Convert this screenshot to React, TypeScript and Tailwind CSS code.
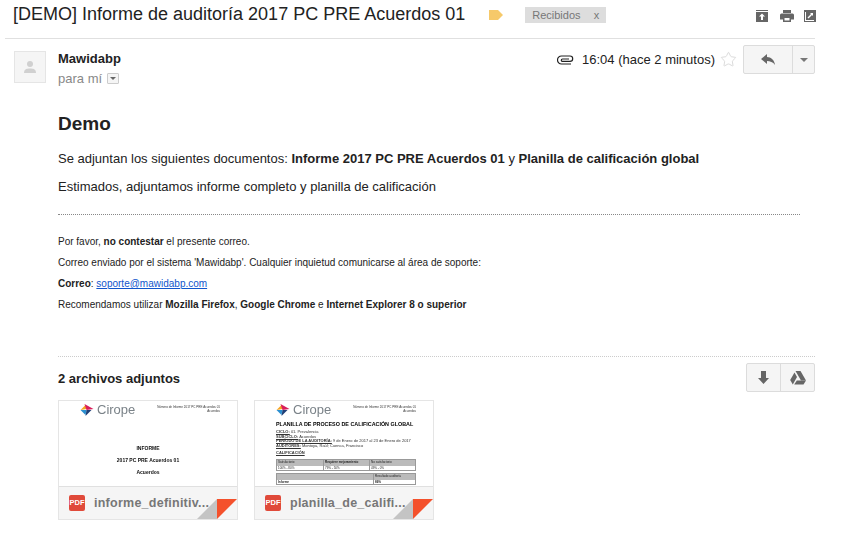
import { Star } from "lucide-react";

function PdfBadge() {
  return (
    <span className="flex h-4 w-4 shrink-0 items-center justify-center rounded-[2px] bg-[#e04a3a] text-[7.5px] font-bold leading-none text-white">
      PDF
    </span>
  );
}

function Attachment({ name, children }: { name: string; children: React.ReactNode }) {
  return (
    <div className="relative h-[120px] w-[180px] overflow-hidden border border-[#e5e5e5] bg-white">
      <div className="h-[85px] overflow-hidden">{children}</div>
      <div className="flex h-[33px] items-center gap-[9px] border-t border-[#e0e0e0] bg-[#f5f5f5] pl-[10px]">
        <PdfBadge />
        <span className="text-[12.5px] font-bold tracking-[0.25px] text-[#777]">{name}</span>
      </div>
      <svg className="absolute bottom-0 right-0" width="40" height="20" viewBox="0 0 40 20">
        <path d="M0 20 L20 0 V20 Z" fill="#c4c4c4" />
        <path d="M20 0 H40 L20 20 Z" fill="#f4512c" />
      </svg>
    </div>
  );
}

function CiropeLogo() {
  return (
    <div className="flex items-center gap-[3px]">
      <svg width="14" height="12" viewBox="0 0 13 12">
        <path d="M0 6 L5 1 L6 5 Z" fill="#f5a623" />
        <path d="M4 0 L13 5 L6 6 Z" fill="#d81e5b" />
        <path d="M0 6 L6 6 L5 11 Z" fill="#2a8fd0" />
        <path d="M6 6 H11 L5 12 Z" fill="#1f3f77" />
      </svg>
      <span className="text-[13px] leading-none text-[#7a8288]">Cirope</span>
    </div>
  );
}

function ThumbHeader() {
  return (
    <div className="whitespace-nowrap pt-[2px] text-right text-[3px] leading-[4px] text-[#333]">
      Número de Informe 2017 PC PRE Acuerdos 01
      <br />
      Acuerdos
    </div>
  );
}

export default function App() {
  return (
    <div className="h-[539px] w-[850px] overflow-hidden bg-white font-['Liberation_Sans',Arial,sans-serif] text-[#222]">
      <div className="ml-[5px] flex h-[39px] w-[810px] items-start border-b border-[#e0e0e0] pl-2 pt-[4px]">
        <h1 className="text-[18px] leading-[21px] font-normal">
          [DEMO] Informe de auditoría 2017 PC PRE Acuerdos 01
        </h1>
        <svg className="ml-[24px] mt-[6px]" width="15" height="10" viewBox="0 0 15 10">
          <path d="M0 0 H9 L14 5 L9 10 H0 Z" fill="#f6c96a" />
        </svg>
        <span className="ml-[21px] mt-[3px] flex h-4 w-[81px] items-center justify-between bg-[#dddddd] px-[7px] text-[11px] text-[#777]">
          <span>Recibidos</span>
          <span>x</span>
        </span>
        <div className="ml-auto mr-[-1px] mt-[6px] flex items-center gap-[10px] text-[#666]">
          <svg className="mr-[2px]" width="12" height="12" viewBox="0 0 12 12">
            <path fillRule="evenodd" d="M0 0 H12 V1 H0 Z M0 2 H12 V12 H0 Z M6 3.5 L3 6.5 H5 V10 H7 V6.5 H9 Z" fill="#666" />
          </svg>
          <svg width="14" height="12" viewBox="0 0 14 12">
            <path fillRule="evenodd" d="M3 0 H11 V3 H3 Z M1.5 3.5 H12.5 A1.5 1.5 0 0 1 14 5 V9.5 H11 V12 H3 V9.5 H0 V5 A1.5 1.5 0 0 1 1.5 3.5 Z M4.5 8 V10.5 H9.5 V8 Z" fill="#666" />
          </svg>
          <svg width="12" height="12" viewBox="0 0 12 12">
            <path fillRule="evenodd" d="M0 0 H12 V12 H0 Z M1 2 V11 H10 V2 Z" fill="#666" />
            <path d="M2 2 H10 V10 H2 Z" fill="#666" />
            <path d="M6 3 H9 V6 L8 5 L4.5 8.5 L3.5 7.5 L7 4 Z" fill="#fff" />
          </svg>
        </div>
      </div>

      <div className="ml-[14px] mt-3 flex w-[801px] items-start">
        <div className="flex h-8 w-8 items-center justify-center border border-[#e5e5e5] bg-[#f5f5f5]">
          <svg width="14" height="14" viewBox="0 0 14 14">
            <circle cx="7" cy="4" r="3" fill="#d0d0d0" />
            <path d="M1 13 C1 9 4 8.5 7 8.5 C10 8.5 13 9 13 13 Z" fill="#d0d0d0" />
          </svg>
        </div>
        <div className="ml-3">
          <div className="text-[13px] font-bold leading-[15px] text-[#222]">Mawidabp</div>
          <div className="mt-[5px] flex items-center gap-[5px] text-[13px] leading-[15px] text-[#888]">
            <span>para mí</span>
            <span className="flex h-[11px] w-3 items-center justify-center rounded-[1px] border border-[#ccc] bg-[#f5f5f5]">
              <span className="h-0 w-0 border-x-[3px] border-t-[3px] border-x-transparent border-t-[#666]" />
            </span>
          </div>
        </div>
        <div className="ml-auto mt-[-6px] flex items-center">
          <svg width="17" height="10" viewBox="0 0 17 10" fill="none" stroke="#222" strokeWidth="1.2">
            <path d="M14 9 H4.5 A4 4 0 0 1 4.5 1 H13 A2.7 2.7 0 0 1 13 6.4 H5.5 A1.2 1.2 0 0 1 5.5 4 H12" />
          </svg>
          <span className="ml-[8px] text-[13px] text-[#222]">16:04 (hace 2 minutos)</span>
          <Star className="ml-[5px] h-[17px] w-[17px] text-[#d5d5d5]" strokeWidth={1.2} />
          <div className="ml-[6px] flex h-[29px] w-[72px] rounded-[2px] border border-[#dcdcdc] bg-[#f5f5f5]">
            <div className="flex w-[49px] items-center justify-center border-r border-[#dcdcdc]">
              <svg width="14" height="11" viewBox="0 0 14 11">
                <path d="M6 0 L0 5 L6 10 V7 C9 7 12 8 14 11 C13.5 6 10 3 6 3 Z" fill="#666" />
              </svg>
            </div>
            <div className="flex flex-1 items-center justify-center">
              <span className="h-0 w-0 border-x-4 border-t-4 border-x-transparent border-t-[#777]" />
            </div>
          </div>
        </div>
      </div>

      <div className="ml-[58px] mt-[27px] w-[742px]">
        <h2 className="text-[19px] font-bold leading-[22px] text-[#222]">Demo</h2>
        <p className="mt-[16px] text-[13px] leading-[15px]">
          Se adjuntan los siguientes documentos: <b>Informe 2017 PC PRE Acuerdos 01</b> y{" "}
          <b>Planilla de calificación global</b>
        </p>
        <p className="mt-[13px] text-[13px] leading-[15px]">
          Estimados, adjuntamos informe completo y planilla de calificación
        </p>
        <div className="mt-5 border-t border-dotted border-[#888]" />
        <div className="mt-5 flex flex-col gap-[7px] text-[10px] leading-[14px]">
          <p>
            Por favor, <b>no contestar</b> el presente correo.
          </p>
          <p>Correo enviado por el sistema 'Mawidabp'. Cualquier inquietud comunicarse al área de soporte:</p>
          <p>
            <b>Correo</b>: <a className="text-[#1155cc] underline">soporte@mawidabp.com</a>
          </p>
          <p>
            Recomendamos utilizar <b>Mozilla Firefox</b>, <b>Google Chrome</b> e{" "}
            <b>Internet Explorer 8 o superior</b>
          </p>
        </div>
      </div>

      <div className="ml-[58px] mt-[44px] w-[757px] border-t border-dotted border-[#ccc]">
        <div className="mt-[6px] flex items-center justify-between">
          <span className="pt-[2px] text-[13px] font-bold text-[#222]">2 archivos adjuntos</span>
          <div className="flex h-[29px] w-[69px] rounded-[2px] border border-[#dcdcdc] bg-[#f5f5f5]">
            <div className="flex w-[34px] items-center justify-center border-r border-[#dcdcdc]">
              <svg width="11" height="13" viewBox="0 0 11 13">
                <path d="M3 0 H8 V7 H11 L5.5 13 L0 7 H3 Z" fill="#666" />
              </svg>
            </div>
            <div className="flex flex-1 items-center justify-center">
              <svg width="16" height="14" viewBox="0 0 16 14">
                <path d="M5.5 0 H10.5 L16 9.5 H11 Z" fill="#666" />
                <path d="M4.5 1.5 L7 6 L2.8 13.5 L0.2 9 Z" fill="#666" />
                <path d="M4.2 13.5 L6.8 9.5 H16 L13.5 13.5 Z" fill="#666" />
              </svg>
            </div>
          </div>
        </div>
        <div className="mt-2 flex gap-4">
          <Attachment name="informe_definitiv...">
            <div className="h-full blur-[0.35px]">
              <div className="flex justify-between pl-[21px] pr-[17px] pt-[2px]">
                <CiropeLogo />
                <ThumbHeader />
              </div>
              <div className="mt-[29px] flex flex-col items-center gap-[6px] text-[5px] font-bold leading-[6px] text-[#111]">
                <span>INFORME</span>
                <span>2017 PC PRE Acuerdos 01</span>
                <span>Acuerdos</span>
              </div>
            </div>
          </Attachment>
          <Attachment name="planilla_de_califi...">
            <div className="h-full pl-[21px] pr-[17px] pt-[2px] blur-[0.35px]">
              <div className="flex justify-between">
                <CiropeLogo />
                <ThumbHeader />
              </div>
              <div className="mt-[5px] whitespace-nowrap text-[5.4px] font-bold leading-[6px] text-black">
                PLANILLA DE PROCESO DE CALIFICACIÓN GLOBAL
              </div>
              <div className="mt-[3px] whitespace-nowrap text-[4px] leading-[4.5px] text-[#333]">
                <div><b className="underline">CICLO:</b> 01. Prevalencia</div>
                <div><b className="underline">SUBCICLO:</b> Acuerdos</div>
                <div><b className="underline">PERÍODO DE LA AUDITORÍA:</b> 9 de Enero de 2017 al 23 de Enero de 2017</div>
                <div><b className="underline">AUDITORES:</b> Montoya, Raúl; Cuenca, Francisco</div>
                <div className="mt-[3px]"><b className="underline">CALIFICACIÓN</b></div>
              </div>
              <div className="mt-[3px] grid grid-cols-[47px_46px_1fr] border border-[#999] text-[3px] leading-[4px]">
                <span className="h-[6px] border-r border-[#999] bg-[#bbb] pl-px">Satisfactorio</span>
                <span className="h-[6px] border-r border-[#999] bg-[#bbb] pl-px font-bold">Requiere mejoramiento</span>
                <span className="h-[6px] bg-[#bbb] pl-px">No satisfactorio</span>
                <span className="h-1 border-r border-[#999] pl-px">100% - 80%</span>
                <span className="h-1 border-r border-[#999] pl-px">79% - 50%</span>
                <span className="h-1 pl-px">49% - 0%</span>
              </div>
              <div className="mt-[2px] grid grid-cols-[97px_1fr] border border-[#999] text-[3px] leading-[4px]">
                <span className="h-[6px] border-r border-[#999] bg-[#bbb]" />
                <span className="h-[6px] bg-[#bbb] pl-px">Resultado auditoría</span>
                <span className="h-1 border-r border-[#999] pl-px font-bold">Informe</span>
                <span className="h-1 pl-px font-bold">86%</span>
              </div>
            </div>
          </Attachment>
        </div>
      </div>
    </div>
  );
}
